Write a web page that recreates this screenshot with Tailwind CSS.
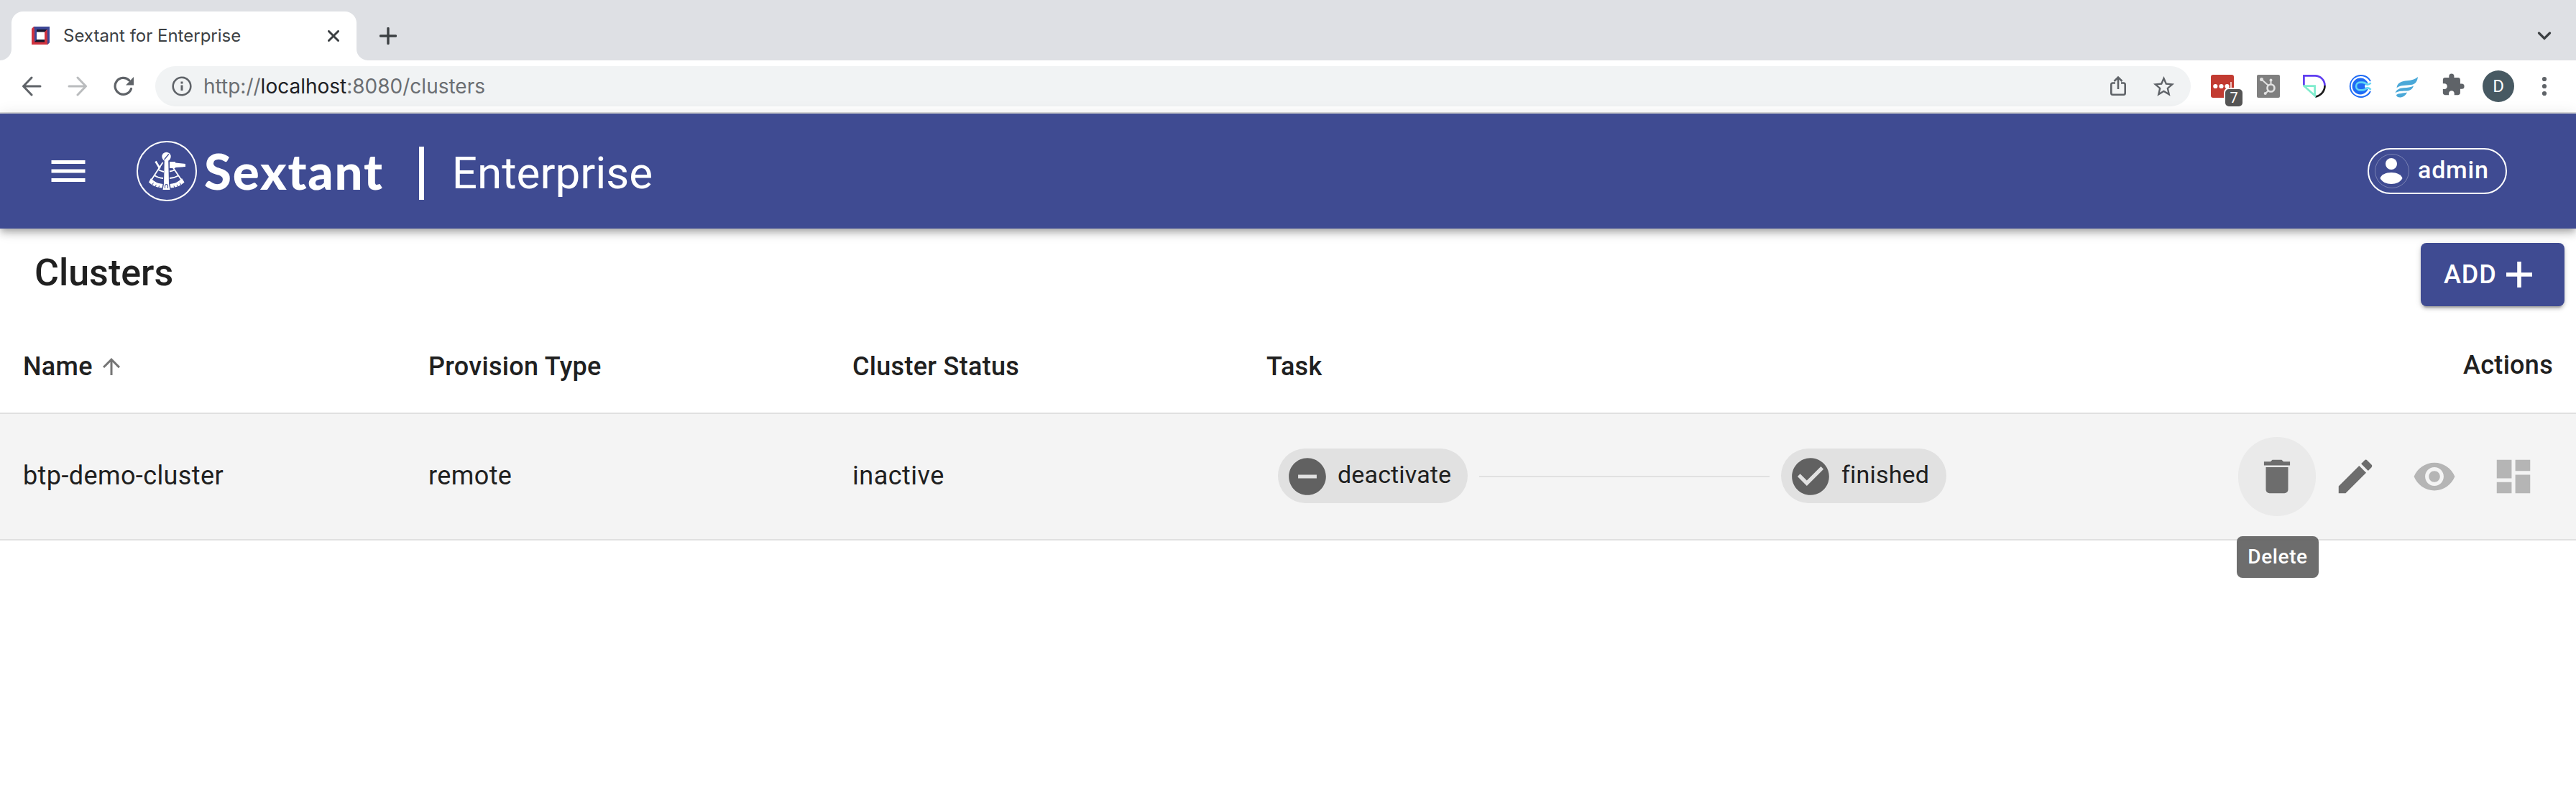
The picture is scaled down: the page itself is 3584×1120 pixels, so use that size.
<!DOCTYPE html>
<html lang="en">
<head>
<meta charset="utf-8">
<title>Sextant for Enterprise</title>
<script src="https://cdn.jsdelivr.net/npm/@tailwindcss/browser@4"></script>
</head>
<body class="bg-white">
<div class="h-[1120px] w-[3584px] overflow-hidden bg-white font-[Roboto,sans-serif] text-[#202020]">

  <!-- Browser tab strip -->
  <div class="flex h-[84px] bg-[#dee0e4] pt-4">
    <div class="flex w-4 items-end"><svg class="size-4" viewBox="0 0 16 16"><path d="M16 0V16H0A16 16 0 0 0 16 0Z" fill="#fff"/></svg></div>
    <div class="flex h-[68px] w-[480px] items-center rounded-t-[16px] bg-white pl-7">
      <svg class="size-[26px] shrink-0" viewBox="0 0 26 26">
        <path d="M0 3L3 0H25V22L22 25H0Z" fill="#d0333f"/>
        <path d="M3 0H25V22L22 25L21.500 4H7V21L4 21V3.500Z" fill="#3d4796"/>
        <path d="M7 4H21.500L18 8H7Z" fill="#15162b"/><path d="M4 21.500L7 18H18V21.500Z" fill="#15162b"/>
        <path d="M18 7.500L21.500 4V24H18Z" fill="#d0333f"/>
        <path d="M7 7.500H18V18H7Z" fill="#fff"/>
      </svg>
      <span class="ml-[18px] whitespace-nowrap font-[Inter,sans-serif] text-[24px] leading-8 text-[#3c4043]">Sextant for Enterprise</span>
      <svg class="mr-6 ml-auto size-4 shrink-0" viewBox="0 0 16 16"><path d="M1.500 1.500L14.500 14.500M14.500 1.500L1.500 14.500" stroke="#3c4043" stroke-width="3" stroke-linecap="round"/></svg>
    </div>
    <div class="flex w-4 items-end"><svg class="size-4" viewBox="0 0 16 16"><path d="M0 0V16H16A16 16 0 0 1 0 0Z" fill="#fff"/></svg></div>
    <div class="flex flex-1 items-center justify-between pr-[34px] pl-4">
      <svg class="size-6" viewBox="0 0 24 24"><path d="M12 1.500V22.500M1.500 12H22.500" stroke="#3c4043" stroke-width="3.400" stroke-linecap="round"/></svg>
      <svg class="h-3 w-5" viewBox="0 0 20 12"><path d="M2.500 2L10 9.500L17.500 2" fill="none" stroke="#3c4043" stroke-width="3.200" stroke-linecap="round"/></svg>
    </div>
  </div>

  <!-- Browser toolbar -->
  <div class="flex h-[74px] items-center border-b-2 border-[#dcdcdc] bg-white pl-[30px]">
    <svg class="size-7" viewBox="0 0 28 28"><path d="M26 14H3M14 2L2.500 14L14 26" fill="none" stroke="#5f6368" stroke-width="3" stroke-linecap="round" stroke-linejoin="round"/></svg>
    <svg class="ml-9 size-7" viewBox="0 0 28 28"><path d="M2 14H25M14 2L25.500 14L14 26" fill="none" stroke="#babcbe" stroke-width="3" stroke-linecap="round" stroke-linejoin="round"/></svg>
    <svg class="ml-9 size-7" viewBox="0 0 28 28"><path d="M24.500 17.500A11.500 11.500 0 1 1 21.800 5.800" fill="none" stroke="#5f6368" stroke-width="3.200" stroke-linecap="round"/><path d="M28 1V12.500H17Z" fill="#5f6368"/></svg>
    <div class="ml-[30px] flex h-14 w-[2832px] items-center rounded-full bg-[#f1f3f4] pl-[22px] pr-5">
      <svg class="size-[30px]" viewBox="0 0 30 30"><circle cx="15" cy="15" r="12.300" fill="none" stroke="#5f6368" stroke-width="2.600"/><path d="M15 13.500V21" stroke="#5f6368" stroke-width="3"/><path d="M15 8.500V11.500" stroke="#5f6368" stroke-width="3"/></svg>
      <span class="ml-[15px] whitespace-nowrap font-[Inter,sans-serif] text-[28px] leading-9 text-[#6b6e72]">http://<span class="text-[#202124]">localhost</span>:8080/clusters</span>
      <svg class="ml-auto h-[30px] w-6" viewBox="0 0 24 30"><path d="M8 10.500H4.500Q2.300 10.500 2.300 12.700V24.500Q2.300 26.700 4.500 26.700H19.500Q21.700 26.700 21.700 24.500V12.700Q21.700 10.500 19.500 10.500H16M12 19V3M6.500 8L12 2.500L17.500 8" fill="none" stroke="#5f6368" stroke-width="2.600"/></svg>
      <svg class="ml-[34px] size-[35px]" viewBox="0 0 24 24"><path fill="#5f6368" d="M22 9.240l-7.190-.62L12 2 9.190 8.630 2 9.240l5.460 4.730L5.820 21 12 17.270 18.180 21l-1.630-7.030L22 9.240zM12 15.400l-3.760 2.270 1-4.280-3.320-2.880 4.380-.38L12 6.100l1.710 4.040 4.380.38-3.320 2.880 1 4.280L12 15.400z"/></svg>
    </div>
    <div class="ml-7 flex items-center gap-8">
      <div class="relative size-8 rounded-[3px] bg-[#c23b31]">
        <svg class="size-8" viewBox="0 0 32 32"><circle cx="6.300" cy="16" r="3.100" fill="#fff"/><circle cx="14.500" cy="16" r="3.100" fill="#fff"/><circle cx="22.500" cy="16" r="3.100" fill="#fff"/><path d="M28 10V21" stroke="#fff" stroke-width="1.400"/></svg>
        <span class="absolute top-[18px] left-[18px] flex size-7 items-center justify-center rounded-[7px] border-2 border-white bg-[#555] text-[20px] leading-none text-white">7</span>
      </div>
      <svg class="size-8" viewBox="0 0 32 32"><rect width="32" height="32" rx="2" fill="#7f7f7f"/><g stroke="#e2e2e2" fill="none"><circle cx="19.500" cy="18.500" r="5" stroke-width="2.600"/><path d="M6.500 6.500L15.500 14.500M19.500 13V7.500M16 22L12 26" stroke-width="2"/></g><g fill="#e2e2e2"><circle cx="6.500" cy="6.500" r="2.500"/><circle cx="19.500" cy="7.500" r="2"/><circle cx="11.700" cy="26" r="2"/></g></svg>
      <svg class="size-8" viewBox="0 0 32 32" fill="none" stroke-width="2.700"><path d="M1.400 15V1.400H17A13.600 13.600 0 0 1 30.500 15" stroke="#5f3df0"/><path d="M30.500 15A15.500 15.500 0 0 1 17 30.600" stroke="#1c1c1c"/><path d="M1.500 15.600H16.600V29Z" stroke="#7eeccd"/></svg>
      <svg class="size-8" viewBox="0 0 32 32" fill="none"><path d="M30 9A15 15 0 1 0 30 23" stroke="#1f6bf5" stroke-width="1.900"/><circle cx="16" cy="16" r="11.400" fill="#1f6bf5"/><path d="M31.500 11.500L23.500 12.500L22 16L23.500 19.500L31.500 20.500Z" fill="#fff"/><path d="M30.500 11.200Q28 14.300 25 13.600Q22.500 10.600 18.500 10.600H15.500A5.400 5.400 0 0 0 15.500 21.400H18.500Q22.500 21.400 25 18.400Q28 17.700 30.500 20.800" stroke="#5ed6f5" stroke-width="2.600"/></svg>
      <svg class="size-8" viewBox="0 0 32 32" fill="#4aa8d8"><path d="M32 3C31 12 26 14 20 14.300C12 14.800 6 15 2.500 18.500C3 11 10 8.500 17 8.200C23 8 28 6.500 32 3Z"/><path d="M26 15.500C24 21 20 22.500 15 22.600C8 22.800 4 23 0.500 25.500C2 20.500 7 18.500 12 18.200C18 17.800 22 17.500 26 15.500Z"/><path d="M17 24.500C15 29 11 31.500 7 31.500C4 31.500 2 30 2 28C5 25.500 12 26 17 24.500Z"/></svg>
      <svg class="-mt-1 size-[34px]" viewBox="0 0 24 24"><path fill="#5f6368" d="M20.500 11H19V7c0-1.100-.9-2-2-2h-4V3.500a2.500 2.500 0 0 0-5 0V5H4c-1.100 0-1.990.9-1.990 2v3.800H3.500c1.490 0 2.700 1.210 2.700 2.700s-1.210 2.700-2.700 2.700H2V20c0 1.100.9 2 2 2h3.800v-1.500c0-1.490 1.210-2.700 2.700-2.700 1.490 0 2.700 1.210 2.700 2.700V22H17c1.100 0 2-.9 2-2v-4h1.500a2.500 2.500 0 0 0 0-5z"/></svg>
    </div>
    <div class="ml-6 flex size-11 items-center justify-center rounded-full bg-[#475962] text-[24px] leading-none text-white">D</div>
    <svg class="ml-9 h-7 w-3" viewBox="0 0 12 28" fill="#5f6368"><circle cx="6" cy="4" r="3.100"/><circle cx="6" cy="14" r="3.100"/><circle cx="6" cy="24" r="3.100"/></svg>
  </div>

  <!-- App bar -->
  <header class="relative flex h-[160px] items-center bg-[#3f4b92] pl-[71px] pr-24 text-white shadow-[0_4px_8px_-2px_rgba(0,0,0,0.2),0_8px_10px_0_rgba(0,0,0,0.14),0_2px_20px_0_rgba(0,0,0,0.12)]">
    <svg class="h-[30px] w-12" viewBox="0 0 48 30" fill="#fff"><path d="M.5 0H47.500V5H.5zM.5 12.500H47.500V17.500H.5zM.5 25H47.500V30H.5z"/></svg>
    <svg class="ml-[71px] size-[84px]" viewBox="0 0 84 84" fill="none" stroke="#fff">
      <circle cx="42" cy="42" r="41" stroke-width="2"/>
      <circle cx="41.500" cy="22" r="6.200" fill="#fff" stroke="none"/>
      <path d="M38.800 27H44.200L45 60L46.500 68H36.500L38 60Z" fill="#fff" stroke="none"/>
      <path d="M38.500 26L44.800 18.500" stroke="#3f4b92" stroke-width="1.300"/>
      <path d="M39.500 66V63Q39.500 60.500 41.500 60.500Q43.500 60.500 43.500 63V66" stroke="#3f4b92" stroke-width="1.100"/>
      <path d="M26.500 28.500L32.500 38.500" stroke-width="2.600"/>
      <path d="M36.500 30L19.500 56M50 36L63.500 56M29.500 39.500Q33 42 38 43M25 48Q30 51.500 37 52M46 42.500Q50 42 53 40.500M46 52Q53 51.500 58 48.500" stroke-width="1.800"/>
      <path d="M46 29H54V30.500L68 32V36L54 37V38H46Z" fill="#fff" stroke="none"/>
      <path d="M20 52L17 57.500Q24 65 35.500 65.500L36.500 60Q26 59 20 52ZM63 52L66.500 57.500Q59 65 47.500 65.500L46.500 60Q57 59 63 52Z" fill="#fff" stroke="none"/>
      <path d="M21 62L23.500 58.500M25.500 64.500L27.500 61M30.500 66L31.500 62.500M62.500 62L60 58.500M58 64.500L56 61M53 66L52 62.500" stroke="#3f4b92" stroke-width="1"/>
    </svg>
    <span class="ml-[10px] whitespace-nowrap font-[Lato,sans-serif] text-[69px] leading-[80px] font-black tracking-[1.8px]">Sextant</span>
    <span class="mt-1.5 ml-[49px] h-[74px] w-[7px] bg-white"></span>
    <span class="mt-1.5 ml-[39px] whitespace-nowrap text-[62px] leading-[72px]">Enterprise</span>
    <div class="ml-auto flex h-16 w-[194px] items-center rounded-full border-2 border-white pl-2">
      <svg class="size-12" viewBox="0 0 48 48" fill="#fff"><circle cx="24" cy="24" r="23.500" fill="none" stroke="#fff" stroke-opacity=".3"/><circle cx="23" cy="14" r="8"/><path d="M7.500 34C9 29 15 26 23 26S37 29 38.500 34C36 39 30 42 23 42S10 39 7.500 34Z"/></svg>
      <span class="mb-1 ml-3 whitespace-nowrap text-[34px] leading-10 font-medium tracking-[0.8px]">admin</span>
    </div>
  </header>

  <!-- Page heading -->
  <main>
    <div class="flex h-[128px] items-start justify-between pt-5 pr-4 pl-12">
      <h1 class="text-[52px] leading-[84px] font-medium">Clusters</h1>
      <button class="flex h-[88px] w-[200px] items-center rounded-lg bg-[#3f4b92] pl-8 text-white shadow-[0_6px_2px_-4px_rgba(0,0,0,0.2),0_4px_4px_0_rgba(0,0,0,0.14),0_2px_10px_0_rgba(0,0,0,0.12)]">
        <span class="text-[36px] leading-10 font-medium tracking-[1px]">ADD</span>
        <svg class="ml-[13px] size-9" viewBox="0 0 36 36"><path d="M18 0V36M0 18H36" stroke="#fff" stroke-width="5.600"/></svg>
      </button>
    </div>

    <!-- Clusters table -->
    <div class="grid h-[130px] grid-cols-[596px_590px_576px_1fr_auto] items-center border-b-2 border-[#e0e0e0] pr-8 text-[36px] font-medium tracking-[0.3px]">
      <div class="flex items-center pl-8">Name
        <svg class="ml-2 size-9" viewBox="0 0 24 24" fill="#757575"><path d="M4 12l1.410 1.410L11 7.830V20h2V7.830l5.580 5.590L20 12l-8-8-8 8z"/></svg></div>
      <div>Provision Type</div><div>Cluster Status</div><div>Task</div><div class="-mt-1">Actions</div>
    </div>
    <div class="grid h-[176px] grid-cols-[596px_590px_592px_1fr_auto] items-center border-b-2 border-[#e0e0e0] bg-[#f4f4f4] pr-8 text-[36px]">
      <div class="pb-0.5 pl-8 tracking-[0.4px]">btp-demo-cluster</div><div class="pb-0.5 tracking-[0.4px]">remote</div><div class="pb-0.5 tracking-[0.5px]">inactive</div>
      <div class="mb-0.5 flex items-center gap-4">
        <div class="flex h-[76px] w-[264px] items-center rounded-full bg-[#e1e1e1] pl-[10px]">
          <svg class="mt-0.5 size-[62px]" viewBox="0 0 24 24" fill="#616161"><path d="M12 2C6.480 2 2 6.480 2 12s4.480 10 10 10 10-4.480 10-10S17.520 2 12 2zm5 11H7v-2h10v2z"/></svg>
          <span class="mb-[3px] ml-[11px] text-[34px] tracking-[0.15px]">deactivate</span>
        </div>
        <div class="mt-0.5 h-0.5 w-[404px] bg-[#e0e0e0]"></div>
        <div class="flex h-[76px] w-[230px] items-center rounded-full bg-[#e1e1e1] pl-[10px]">
          <svg class="mt-0.5 size-[62px]" viewBox="0 0 24 24" fill="#616161"><path d="M12 2C6.480 2 2 6.480 2 12s4.480 10 10 10 10-4.480 10-10S17.520 2 12 2zm-2 15l-5-5 1.410-1.410L10 14.170l7.590-7.590L19 8l-9 9z"/></svg>
          <span class="mb-[3px] ml-3 text-[34px] tracking-[0.2px]">finished</span>
        </div>
      </div>
      <div class="flex items-center text-[#6d6d6d]">
        <div class="relative flex h-[110px] w-[108px] items-center justify-center rounded-full bg-[#eaeaea]">
          <svg class="size-[62px]" viewBox="0 0 24 24" fill="currentColor"><path d="M6 19c0 1.100.9 2 2 2h8c1.100 0 2-.9 2-2V7H6v12zM19 4h-3.500l-1-1h-5l-1 1H5v2h14V4z"/></svg>
          <div class="absolute top-[138px] -left-0.5 flex h-[58px] w-[114px] items-center justify-center rounded-lg bg-[#616161]/92 text-[28px] font-medium tracking-[0.6px] text-white">Delete</div>
        </div>
        <div class="flex w-[110px] justify-center"><svg class="size-[62px]" viewBox="0 0 24 24" fill="currentColor"><path d="M3 17.250V21h3.750L17.810 9.940l-3.750-3.750L3 17.250zM20.710 7.040c.39-.39.39-1.020 0-1.410l-2.340-2.340a.9959.9959 0 0 0-1.410 0l-1.830 1.830 3.750 3.750 1.830-1.830z"/></svg></div>
        <div class="flex w-[110px] justify-center text-[#b5b5b5]"><svg class="size-[62px]" viewBox="0 0 24 24" fill="currentColor"><path d="M12 4.500C7 4.500 2.730 7.610 1 12c1.730 4.390 6 7.500 11 7.500s9.270-3.110 11-7.500c-1.730-4.390-6-7.500-11-7.500zM12 17c-2.760 0-5-2.240-5-5s2.240-5 5-5 5 2.240 5 5-2.240 5-5 5zm0-8c-1.660 0-3 1.340-3 3s1.340 3 3 3 3-1.340 3-3-1.340-3-3-3z"/></svg></div>
        <div class="flex w-[110px] justify-center text-[#b5b5b5]"><svg class="size-[62px]" viewBox="0 0 24 24" fill="currentColor"><path d="M3 13h8V3H3v10zm0 8h8v-6H3v6zm10 0h8V11h-8v10zm0-18v6h8V3h-8z"/></svg></div>
      </div>
    </div>
  </main>
</div>
</body>
</html>
